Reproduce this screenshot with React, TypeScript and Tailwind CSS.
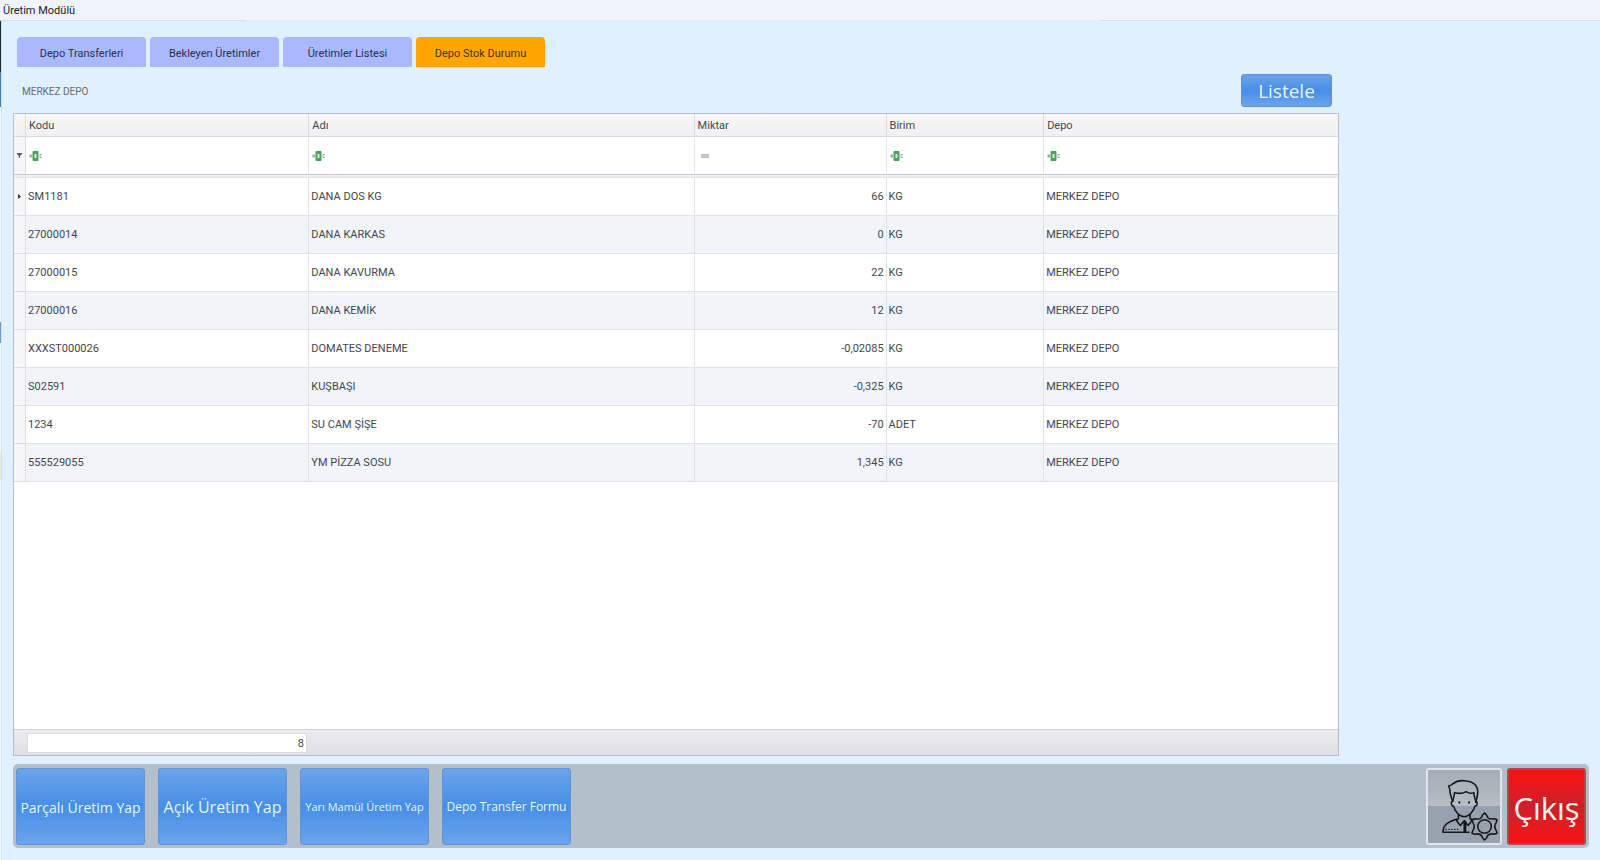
type Column = {
  key: "kodu" | "adi" | "miktar" | "birim" | "depo";
  label: string;
  numeric?: boolean;
};

const TABS = [
  "Depo Transferleri",
  "Bekleyen Üretimler",
  "Üretimler Listesi",
  "Depo Stok Durumu",
];

const ACTIVE_TAB = "Depo Stok Durumu";

const COLUMNS: Column[] = [
  { key: "kodu", label: "Kodu" },
  { key: "adi", label: "Adı" },
  { key: "miktar", label: "Miktar", numeric: true },
  { key: "birim", label: "Birim" },
  { key: "depo", label: "Depo" },
];

const STOCK = [
  { kodu: "SM1181", adi: "DANA DOS KG", miktar: "66", birim: "KG", depo: "MERKEZ DEPO" },
  { kodu: "27000014", adi: "DANA KARKAS", miktar: "0", birim: "KG", depo: "MERKEZ DEPO" },
  { kodu: "27000015", adi: "DANA KAVURMA", miktar: "22", birim: "KG", depo: "MERKEZ DEPO" },
  { kodu: "27000016", adi: "DANA KEMİK", miktar: "12", birim: "KG", depo: "MERKEZ DEPO" },
  { kodu: "XXXST000026", adi: "DOMATES DENEME", miktar: "-0,02085", birim: "KG", depo: "MERKEZ DEPO" },
  { kodu: "S02591", adi: "KUŞBAŞI", miktar: "-0,325", birim: "KG", depo: "MERKEZ DEPO" },
  { kodu: "1234", adi: "SU CAM ŞİŞE", miktar: "-70", birim: "ADET", depo: "MERKEZ DEPO" },
  { kodu: "555529055", adi: "YM PİZZA SOSU", miktar: "1,345", birim: "KG", depo: "MERKEZ DEPO" },
];

const ACTIONS = [
  { label: "Parçalı Üretim Yap", size: "text-[14px]" },
  { label: "Açık Üretim Yap", size: "text-[16px]" },
  { label: "Yarı Mamül Üretim Yap", size: "text-[11px]" },
  { label: "Depo Transfer Formu", size: "text-[12px]" },
];

const BLUE_BUTTON =
  "rounded-[3px] border border-[#5f92d8] bg-linear-to-b from-[#6ba4ea] via-[#468ee7] to-[#6ba4ea] text-[#e6f4ff]";

function ContainsIcon() {
  return (
    <svg width="14" height="10" viewBox="0 0 14 10" aria-hidden="true">
      <rect x="0.5" y="3.5" width="2.5" height="3" fill="#a3aaa8" />
      <rect x="3.5" y="0" width="6" height="10" rx="1" fill="#4aa45c" />
      <rect x="5.5" y="3" width="2" height="4" fill="#d3f0d3" />
      <path d="M13 3.5h-2v3h2" fill="none" stroke="#a3aaa8" />
    </svg>
  );
}

function EqualsIcon() {
  return (
    <svg width="14" height="10" viewBox="0 0 14 10" aria-hidden="true">
      <rect x="3" y="3" width="8" height="4" fill="#c9cbd0" />
      <path d="M3 3.5h8M3 6.5h8" stroke="#b4b6bb" />
    </svg>
  );
}

function UserSettingsIcon() {
  return (
    <svg
      width="60"
      height="64"
      viewBox="0 0 60 64"
      fill="none"
      stroke="#15181b"
      strokeWidth="1.6"
      strokeLinejoin="round"
      strokeLinecap="round"
      aria-hidden="true"
    >
      <path d="M11 22C9 17 8 12 8 9c-1-1-1-2-1-3 2 0 3-1 4-2 4-3 9-4 14-3 6 0 12 4 12 11 0 4-1 7-2 11" />
      <path d="M11 22c1-3 1-5 2-9 4 1 9 1 12-1 3 2 6 2 8 1 0 3 1 6 2 9" />
      <path d="M11 22c-2 0-2 5 1 5 1 5 6 11 11 11s10-6 11-11c3 0 3-5 1-5" />
      <path d="M17 36v4l-4 1C5 44 1 47 1 54h27M29 36v4l3 1M17 40l-2 2 4 5 4-5 4 5 4-5-2-2M23 42v12" />
      <path d="M24 43v10" strokeWidth="2.4" />
      <path d="M4 51h15" strokeDasharray="0.5 2.5" strokeWidth="1.2" />
      <path d="M18 23v.5M28 23v.5" strokeWidth="2" />
      <path d="M42 36l2-2 2 2c1 4 4 5 8 4l3 1-1 3c-2 3-2 5 0 8l1 3-3 1c-4-1-7 0-8 4l-2 2-2-2c-1-4-4-5-8-4l-3-1 1-3c2-3 2-5 0-8l-1-3 3-1c4 1 7 0 8-4z" />
      <circle cx="44" cy="48" r="7" />
    </svg>
  );
}

function StockTable() {
  return (
    <table className="w-full table-fixed border-separate border-spacing-0 text-left text-[11px] leading-4 text-[#45454f]">
      <colgroup>
        <col className="w-3" />
        <col className="w-[21.4%]" />
        <col className="w-[29.1%]" />
        <col className="w-[14.5%]" />
        <col className="w-[11.9%]" />
        <col />
      </colgroup>
      <thead>
        <tr className="h-[23px] bg-linear-to-b from-[#f7f7f8] to-[#f0f0f2]">
          <th className="border-r border-b border-[#d9dbe0]" />
          {COLUMNS.map((col) => (
            <th
              key={col.key}
              className="border-r border-b border-[#d9dbe0] px-[3px] pt-px font-normal last:border-r-0"
            >
              {col.label}
            </th>
          ))}
        </tr>
        <tr className="h-[38px] bg-white">
          <td className="border-r border-b border-r-[#d9dbe0] border-b-[#c9cbd6] bg-[#f6f6f8]">
            <svg className="mx-auto" width="5" height="5" viewBox="0 0 5 5" aria-hidden="true">
              <path d="M0 0h5v1L3 3v2H2V3L0 1z" fill="#5a5a62" />
            </svg>
          </td>
          {COLUMNS.map((col) => (
            <td
              key={col.key}
              className="border-r border-b border-r-[#e3e5ea] border-b-[#c9cbd6] px-[3px] last:border-r-0"
            >
              {col.numeric ? <EqualsIcon /> : <ContainsIcon />}
            </td>
          ))}
        </tr>
        <tr className="h-[3px] bg-[#efeff2]">
          <td colSpan={6} className="border-b border-[#e3e5ea]" />
        </tr>
      </thead>
      <tbody>
        {STOCK.map((row, index) => (
          <tr key={row.kodu} className="h-[38px] odd:bg-white even:bg-[#f1f5fa]">
            <td className="border-r border-b border-[#dcdee3] bg-[#f6f6f8]">
              {index === 0 && (
                <svg className="mx-auto" width="3" height="5" viewBox="0 0 3 5" aria-hidden="true">
                  <path d="M0 0l3 2.5-3 2.5z" fill="#33333b" />
                </svg>
              )}
            </td>
            {COLUMNS.map((col) => (
              <td
                key={col.key}
                className={
                  col.numeric
                    ? "border-r border-b border-[#dfe2e8] px-0.5 text-right"
                    : "border-r border-b border-[#dfe2e8] px-0.5 last:border-r-0"
                }
              >
                {row[col.key]}
              </td>
            ))}
          </tr>
        ))}
      </tbody>
    </table>
  );
}

export default function App() {
  return (
    <div className="flex min-h-screen flex-col bg-[#e0f0ff] font-[Roboto,'Noto_Sans',sans-serif]">
      <header className="h-5 bg-[#eff3fa] px-[3px] pt-px text-[11px] leading-5 text-[#1c1c1c]">
        Üretim Modülü
      </header>
      <div className="flex h-px justify-between">
        <span className="w-[246px] bg-[#cddfeb]" />
        <span className="w-[500px] bg-[#cddfeb]" />
      </div>

      <div className="flex flex-1">
        <div className="flex w-0.5 flex-col border-r border-[#cfe2f2] bg-[#f4f8fb]">
          <span className="h-[51px] bg-[#20242c]" />
          <span className="h-[35px] bg-[#3f7fb8]" />
          <span className="mt-[215px] h-[21px] bg-[#6d98c8]" />
          <span className="mt-[109px] h-7 bg-[#e6ebd2]" />
        </div>

        <main className="flex flex-1 flex-col px-[11px] pt-4 pb-3">
          <nav className="flex gap-1 pl-1">
            {TABS.map((tab) => (
              <button
                key={tab}
                type="button"
                className={
                  tab === ACTIVE_TAB
                    ? "h-[30px] w-[129px] rounded-t-[4px] bg-[#ffa500] pt-1 text-[11px] text-[#4a3200]"
                    : "h-[30px] w-[129px] rounded-t-[4px] bg-[#aab9ff] pt-1 text-[11px] text-[#2b2f4d]"
                }
              >
                {tab}
              </button>
            ))}
          </nav>

          <div className="mr-[250px] flex flex-1 flex-col">
            <div className="flex h-[46px] items-center justify-between pr-[7px] pl-[9px]">
              <span className="pt-0.5 text-[10px] text-[#666b70]">MERKEZ DEPO</span>
              <button
                type="button"
                className={`${BLUE_BUTTON} h-[33px] w-[91px] pt-0.5 font-['Open_Sans','Noto_Sans',sans-serif] text-[19px] leading-6`}
              >
                Listele
              </button>
            </div>

            <section className="flex flex-1 flex-col border border-[#b4bfcc] bg-white">
              <StockTable />
              <div className="mt-auto flex h-[26px] items-center border-t border-[#d2d4d9] bg-linear-to-b from-[#ebebee] to-[#dfe0e4] pl-[13px]">
                <output className="h-5 w-[280px] rounded-[2px] border border-[#dcdde2] bg-white pr-0.5 text-right text-[11px] leading-5 text-[#45454f]">
                  {STOCK.length}
                </output>
              </div>
            </section>
          </div>

          <footer className="mt-2 flex h-[84px] items-center gap-[13px] rounded-[5px] bg-[#b3bfca] px-[3px] font-['Open_Sans','Noto_Sans',sans-serif]">
            {ACTIONS.map((action) => (
              <button
                key={action.label}
                type="button"
                className={`${BLUE_BUTTON} ${action.size} h-[77px] w-[129px] pt-0.5 whitespace-nowrap`}
              >
                {action.label}
              </button>
            ))}
            <div className="ml-auto flex gap-[5px]">
              <button
                type="button"
                aria-label="Kullanıcı Ayarları"
                className="flex h-[77px] w-[76px] items-center justify-center rounded-[3px] border-2 border-[#dfe5ea] bg-linear-to-b from-[#a4adb6] from-0% via-[#b7bdc3] via-50% to-[#97a2ae] to-50% pt-2.5 pl-3.5"
              >
                <UserSettingsIcon />
              </button>
              <button
                type="button"
                className="h-[77px] w-[79px] rounded-[3px] border-2 border-[#b04850] bg-linear-to-b from-[#fb1010] via-[#cb2027] to-[#fb1010] pt-1 text-[31px] text-[#fff0f0]"
              >
                Çıkış
              </button>
            </div>
          </footer>
        </main>
      </div>
    </div>
  );
}
